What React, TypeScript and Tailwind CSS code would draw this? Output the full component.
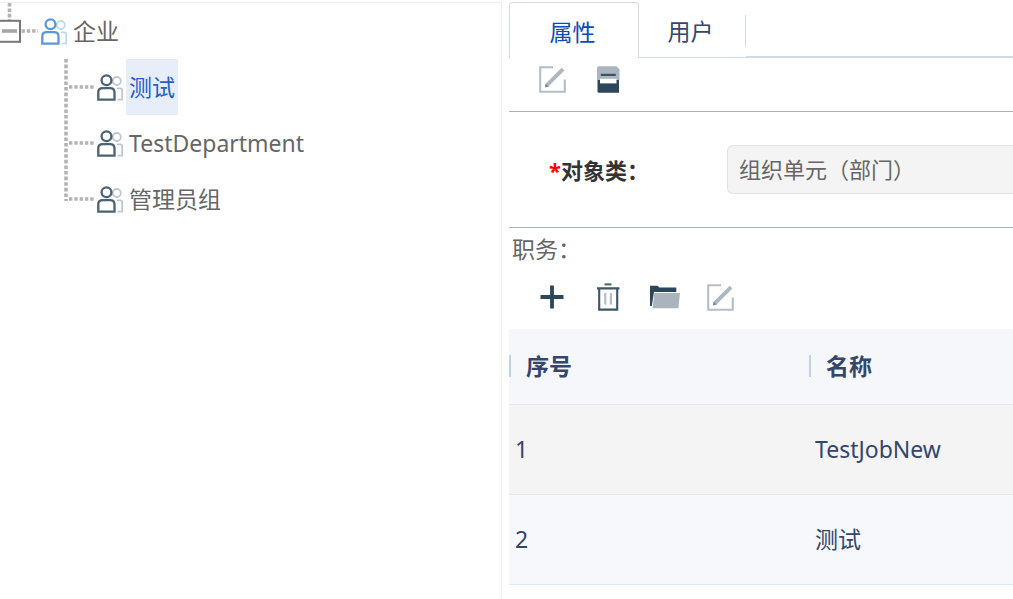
import React, { useState } from "react";

function PeopleIcon({ front, back }: { front: string; back: string }) {
  return (
    <svg width="30" height="30" viewBox="0 0 30 30" fill="none" aria-hidden="true" className="shrink-0">
      <circle cx="20.8" cy="9" r="4" stroke={back} strokeWidth="1.8" />
      <path d="M21 16.3H24.5Q26.2 16.3 26.2 18V27.6H21.5" stroke={back} strokeWidth="1.8" />
      <circle cx="10.5" cy="8.2" r="4.9" stroke={front} strokeWidth="2.3" fill="white" />
      <path d="M2.3 27.6V20.5Q2.3 16.2 6.8 16.2H14Q18.5 16.2 18.5 20.5V27.6Z" stroke={front} strokeWidth="2.3" fill="white" />
    </svg>
  );
}

function Branch({ last }: { last?: boolean }) {
  return (
    <svg width="32" height="56" viewBox="0 0 32 56" aria-hidden="true" className="shrink-0" stroke="#b4b4b4" strokeWidth="3.6">
      <path d={last ? "M2 0V30" : "M2 0V56"} strokeDasharray="3.6 2" />
      <path d="M5 28H30" strokeDasharray="3.4 1.9" />
    </svg>
  );
}

function EditIcon() {
  return (
    <svg width="32" height="32" viewBox="0 0 32 32" fill="none" aria-hidden="true">
      <path d="M17 4.2H4.2V28.8H28.8V16.5" stroke="#b4bec6" strokeWidth="2.1" />
      <path d="M11 22.2L27 6.2" stroke="#adb7bf" strokeWidth="3.9" />
      <path d="M9 24.5L9.6 20.6L12.8 23.6Z" fill="#6f828f" />
    </svg>
  );
}

function SaveIcon() {
  return (
    <svg width="32" height="32" viewBox="0 0 32 32" aria-hidden="true">
      <path d="M5 5Q5 3.2 7 3.2H24.5L27.5 6.2V17H5Z" fill="#aab5bd" />
      <path d="M5.5 17H27V29.8H7Q5.5 29.8 5.5 28.3Z" fill="#2c475a" />
      <rect x="8" y="15.8" width="16.5" height="4.6" fill="#ffffff" />
      <rect x="8.8" y="10.8" width="15" height="2.2" fill="#3a5365" />
    </svg>
  );
}

function PlusIcon() {
  return (
    <svg width="32" height="32" viewBox="0 0 32 32" aria-hidden="true" stroke="#2c475a" strokeWidth="3.8">
      <path d="M4.5 16H27.5M16 4.5V27.5" />
    </svg>
  );
}

function TrashIcon() {
  return (
    <svg width="32" height="32" viewBox="0 0 32 32" fill="none" aria-hidden="true">
      <path d="M12.5 3.4H19.5" stroke="#45606f" strokeWidth="2" />
      <path d="M5 7.4H27.5M7.2 7.4V28.6H25.2V7.4" stroke="#3c5666" strokeWidth="2.1" />
      <path d="M13.3 12V23.5M18.9 12V23.5" stroke="#b4bec6" strokeWidth="2.2" />
    </svg>
  );
}

function FolderIcon() {
  return (
    <svg width="32" height="32" viewBox="0 0 32 32" aria-hidden="true">
      <path d="M2 4.8H9.5L11.5 6.4H28.3V11H6L3.8 25H2Z" fill="#2c475a" />
      <path d="M6.3 12H32L30.3 27.3H4.6Z" fill="#aab4bd" />
    </svg>
  );
}

function IconButton({ label, children }: { label: string; children: React.ReactNode }) {
  return (
    <button type="button" aria-label={label} className="flex size-8 items-center justify-center">
      {children}
    </button>
  );
}

const departments = ["测试", "TestDepartment", "管理员组"];
const jobs = ["TestJobNew", "测试"];

export default function App() {
  const [selected, setSelected] = useState("测试");

  return (
    <div className="flex min-h-screen bg-white pt-[2px] font-['Noto_Sans','Noto_Sans_CJK_SC',sans-serif] text-[23px] leading-8 text-[#666666]">
      <nav className="w-[502px] shrink-0 border-t border-r border-[#f1f1f3]" aria-label="组织">
        <div className="flex h-14 items-center">
          <svg width="40" height="56" viewBox="0 0 40 56" fill="none" aria-hidden="true" className="shrink-0">
            <path d="M9.5 0V17" stroke="#b4b4b4" strokeWidth="3.6" strokeDasharray="3.6 1.8" />
            <path d="M21.5 28H38" stroke="#b4b4b4" strokeWidth="3.6" strokeDasharray="3.4 1.9" />
            <rect x="-1" y="17.8" width="21" height="21" stroke="#777777" strokeWidth="2" />
            <path d="M2 28H17" stroke="#a6a6a6" strokeWidth="3.6" />
          </svg>
          <button type="button" className="flex h-14 items-center">
            <PeopleIcon front="#5b97d9" back="#bcdaf5" />
            <span className="px-[3px]">企业</span>
          </button>
        </div>
        <ul className="pl-16">
          {departments.map((name, i) => (
            <li key={name} className="flex h-14">
              <Branch last={i === departments.length - 1} />
              <button type="button" onClick={() => setSelected(name)} className="flex items-center">
                <PeopleIcon front="#4b6272" back="#bfc9d1" />
                <span
                  className={
                    name === selected
                      ? "flex h-14 items-center bg-[#e7eef9] px-[3px] text-[#1f5fc8]"
                      : "flex h-14 items-center px-[3px]"
                  }
                >
                  {name}
                </span>
              </button>
            </li>
          ))}
        </ul>
      </nav>

      <main className="ml-[7px] min-w-0 flex-1">
        <div role="tablist" className="flex h-14 text-[#34466b]">
          <button
            type="button"
            role="tab"
            aria-selected="true"
            className="w-[130px] rounded-t border border-b-0 border-[#cfdce8] pt-[2px] pr-[3px] text-[#0a4bb5]"
          >
            属性
          </button>
          <button
            type="button"
            role="tab"
            aria-selected="false"
            className="flex w-[107px] items-center border-b border-[#cfdce8] pt-[3px]"
          >
            <span className="flex-1 border-r border-[#cfdce8] pr-[3px]">用户</span>
          </button>
          <div className="flex-1 border-b-2 border-[#cfdce8]" />
        </div>

        <div className="flex h-[54px] items-start gap-6 border-b border-[#a9b3bf] px-[27px] pt-[5px]">
          <IconButton label="编辑">
            <EditIcon />
          </IconButton>
          <IconButton label="保存">
            <SaveIcon />
          </IconButton>
        </div>

        <div className="flex h-[116px] items-center border-b border-[#a9b3bf]">
          <label htmlFor="object-class" className="w-[218px] shrink-0 pl-10 text-[22px] font-bold text-[#333333]">
            <span className="text-[#ff0000]">*</span>对象类：
          </label>
          <input
            id="object-class"
            readOnly
            defaultValue="组织单元（部门）"
            className="h-[49px] min-w-0 flex-1 rounded-l-md border border-r-0 border-[#e0e0e0] bg-[#f4f4f4] px-[11px] pb-1 text-[22px]"
          />
        </div>

        <h2 className="px-[3px] pt-[5px]">职务：</h2>
        <div className="flex h-16 items-center gap-6 px-[27px]">
          <IconButton label="新增">
            <PlusIcon />
          </IconButton>
          <IconButton label="删除">
            <TrashIcon />
          </IconButton>
          <IconButton label="打开">
            <FolderIcon />
          </IconButton>
          <IconButton label="修改">
            <EditIcon />
          </IconButton>
        </div>

        <table className="w-full table-fixed border-collapse text-left text-[#34466b]">
          <thead>
            <tr className="h-[75px] border-b border-[#dfe9f1] bg-[#f5f7fb]">
              <th className="w-[300px] p-0">
                <div className="border-l-2 border-[#c3d2df] pl-[15px] leading-[22px]">序号</div>
              </th>
              <th className="p-0">
                <div className="border-l-2 border-[#c3d2df] pl-[15px] leading-[22px]">名称</div>
              </th>
            </tr>
          </thead>
          <tbody>
            {jobs.map((job, i) => (
              <tr key={job} className="h-[90px] border-b border-[#dfe9f1] odd:bg-[#f4f4f4] even:bg-[#f6f8fc]">
                <td className="px-1.5">{i + 1}</td>
                <td className="px-1.5">{job}</td>
              </tr>
            ))}
          </tbody>
        </table>
      </main>
    </div>
  );
}
